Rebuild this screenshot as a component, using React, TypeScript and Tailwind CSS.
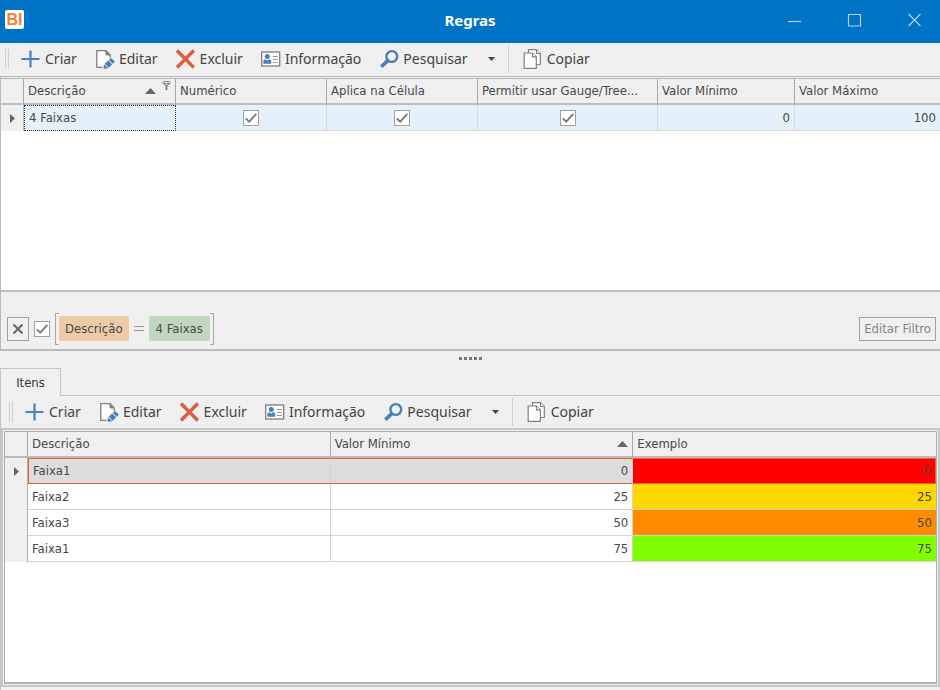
import React from 'react';
import { clsx } from 'clsx';

type IconProps = { className?: string };

const PlusIcon = () => (
  <svg className="h-5 w-5" viewBox="0 0 20 20" stroke="#4a7fb9" strokeWidth="2.2" aria-hidden="true">
    <path d="M9.5 1.5v17M0.5 10h18" />
  </svg>
);

const EditIcon = () => (
  <svg className="h-5 w-5" viewBox="0 0 20 20" aria-hidden="true">
    <path d="M2 1.5H11L15.5 6V17.5H2Z" fill="#fff" />
    <path d="M7.5 18.300H1.800V1.600H11L15.200 6V9" fill="none" stroke="#808080" strokeWidth="1.300" />
    <path d="M11 1.600V6H15.200" fill="#808080" stroke="#808080" strokeWidth="1" />
    <path d="M7.500 20l.9-5 6-6 5 4-6 7z" fill="#efefef" />
    <path
      d="M8.400 19.800l.8-4.300 4.200 3.800zM9.800 14.800l3.400-3.300 3.900 3.800-3.300 3.400zM13.900 10.900l1.500-1.400q.7-.5 1.300 0l2.600 2.500q.6.7 0 1.300l-1.500 1.400z"
      fill="#4a7fb9"
    />
  </svg>
);

const DeleteIcon = () => (
  <svg className="h-5 w-5" viewBox="0 0 20 20" stroke="#da5f42" strokeWidth="3.400" aria-hidden="true">
    <path d="M1 1.500L17.800 18.500M17.800 1.500L1 18.500" />
  </svg>
);

const InfoIcon = () => (
  <svg className="h-5 w-5" viewBox="0 0 20 20" aria-hidden="true">
    <rect x="0.700" y="3" width="18" height="14" fill="#fff" stroke="#7f7f7f" strokeWidth="1.300" />
    <circle cx="6.300" cy="7.500" r="2.500" fill="#4a7fb9" />
    <path d="M2.300 14.800v-2q0-2.300 2-2.600l2 1.300 2-1.300q2 .3 2 2.600v2z" fill="#4a7fb9" />
    <path d="M11.800 7.500h5M11.800 10.500h5M11.800 13.500h5" stroke="#9a9a9a" strokeWidth="1.200" />
  </svg>
);

const SearchIcon = () => (
  <svg className="h-5 w-5" viewBox="0 0 20 20" fill="none" stroke="#4a7fb9" aria-hidden="true">
    <circle cx="12.800" cy="7.500" r="5.400" strokeWidth="2.400" />
    <path d="M8.800 11.600L2.300 17.800" strokeWidth="3.600" />
  </svg>
);

const CopyIcon = () => (
  <svg className="h-5 w-5" viewBox="0 0 20 20" fill="#fff" stroke="#808080" strokeWidth="1.200" aria-hidden="true">
    <path d="M5.500 0.700H13.500L17.300 4.500V15.500H5.500Z" />
    <path d="M13.500 0.700V4.500H17.300" />
    <path d="M1.200 4H9.500L13.300 7.800V19.300H1.200Z" />
    <path d="M9.500 4V7.800H13.300" />
  </svg>
);

const SortIcon = () => (
  <svg className="h-[6px] w-[11px] shrink-0" viewBox="0 0 11 6" aria-hidden="true">
    <path d="M5.500 0L11 6H0z" fill="#666" />
  </svg>
);

const FilterIcon = () => (
  <svg className="h-[9px] w-[9px] shrink-0 self-start" viewBox="0 0 9 9" fill="none" stroke="#777" aria-hidden="true">
    <ellipse cx="4.500" cy="1.700" rx="4" ry="1.200" />
    <path d="M1 2.200L4.500 5 8 2.200" />
    <path d="M4.500 4.500V9" strokeWidth="1.800" />
  </svg>
);

const RowArrow = () => (
  <svg className="mx-auto h-[9px] w-[5px]" viewBox="0 0 5 9" aria-hidden="true">
    <path d="M0 0L5 4.500L0 9z" fill="#666" />
  </svg>
);

const CheckBox = ({ label, className }: IconProps & { label: string }) => (
  <label className={clsx('inline-grid h-4 w-4 place-items-center align-middle', className)}>
    <input
      type="checkbox"
      defaultChecked
      aria-label={label}
      className="peer col-start-1 row-start-1 h-4 w-4 appearance-none border border-[#a0a0a0] bg-white"
    />
    <svg
      className="pointer-events-none invisible col-start-1 row-start-1 h-3 w-3 peer-checked:visible"
      viewBox="0 0 12 12"
      fill="none"
      stroke="#777"
      strokeWidth="1.800"
      aria-hidden="true"
    >
      <path d="M0.800 6.300L4.200 9.700L11.300 1.800" />
    </svg>
  </label>
);

const actions = [
  { label: 'Criar', icon: PlusIcon },
  { label: 'Editar', icon: EditIcon },
  { label: 'Excluir', icon: DeleteIcon },
  { label: 'Informação', icon: InfoIcon },
  { label: 'Pesquisar', icon: SearchIcon },
];

const Toolbar = ({ name, className }: { name: string; className?: string }) => (
  <div
    role="toolbar"
    aria-label={name}
    className={clsx("flex h-8 items-center font-['Noto_Sans',sans-serif] text-sm text-[#444]", className)}
  >
    <span className="mr-3 h-5 w-1 border-x border-[#cfcfcf]" />
    <div className="flex items-center gap-[18px]">
      {actions.map(({ label, icon: Icon }) => (
        <button key={label} type="button" className="flex items-center gap-1">
          <Icon />
          {label}
        </button>
      ))}
    </div>
    <button type="button" aria-label="Mais opções" className="ml-3 flex h-6 w-6 items-center justify-center">
      <svg className="h-1 w-[7px]" viewBox="0 0 7 4" aria-hidden="true">
        <path d="M0 0h7L3.500 4z" fill="#444" />
      </svg>
    </button>
    <span className="ml-1 mr-[14px] h-7 w-px bg-[#cfcfcf]" />
    <button type="button" className="flex items-center gap-1">
      <CopyIcon />
      Copiar
    </button>
  </div>
);

const headCell = 'border-b-2 border-r border-b-[#bcbcbc] border-r-[#a8a8a8] px-1 text-left font-normal';
const lastHeadCell = 'border-b-2 border-[#bcbcbc] px-1 text-left font-normal';

const flags = ['Numérico', 'Aplica na Célula', 'Permitir usar Gauge/Tree...'];

const RulesTable = () => (
  <table className="w-full table-fixed border-separate border-spacing-0">
    <colgroup>
      <col className="w-[23px]" />
      <col className="w-[152px]" />
      <col className="w-[151px]" />
      <col className="w-[151px]" />
      <col className="w-[180px]" />
      <col className="w-[137px]" />
      <col />
    </colgroup>
    <thead>
      <tr className="h-[26px] bg-[#efefef]">
        <th className={headCell} aria-label="Linha" />
        <th className={headCell}>
          <span className="flex items-center gap-[6px]">
            <span className="flex-1">Descrição</span>
            <SortIcon />
            <FilterIcon />
          </span>
        </th>
        {flags.map((flag) => (
          <th key={flag} className={clsx(headCell, 'truncate')}>
            {flag}
          </th>
        ))}
        <th className={headCell}>Valor Mínimo</th>
        <th className={lastHeadCell}>Valor Máximo</th>
      </tr>
    </thead>
    <tbody>
      <tr className="h-[26px] bg-[#e4f1fa]">
        <td className="border-r border-[#b8b8b8] bg-[#efefef]">
          <RowArrow />
        </td>
        <td className="border border-dotted border-[#333] px-1">4 Faixas</td>
        {flags.map((flag) => (
          <td key={flag} className="border-b border-r border-[#d5d9dc] text-center leading-none">
            <CheckBox label={flag} />
          </td>
        ))}
        <td className="border-b border-r border-[#d5d9dc] px-1 text-right">0</td>
        <td className="border-b border-[#d5d9dc] px-1 text-right">100</td>
      </tr>
    </tbody>
  </table>
);

const items = [
  { name: 'Faixa1', min: 0, color: 'bg-[#ff0000]' },
  { name: 'Faixa2', min: 25, color: 'bg-[#ffd700]' },
  { name: 'Faixa3', min: 50, color: 'bg-[#ff8c00]' },
  { name: 'Faixa1', min: 75, color: 'bg-[#80ff00]' },
];

const ItemsTable = () => (
  <table className="w-full table-fixed border-separate border-spacing-0">
    <colgroup>
      <col className="w-[23px]" />
      <col />
      <col />
      <col />
    </colgroup>
    <thead>
      <tr className="h-[26px] bg-[#efefef]">
        <th className={headCell} aria-label="Linha" />
        <th className={headCell}>Descrição</th>
        <th className={headCell}>
          <span className="flex items-center justify-between">
            Valor Mínimo
            <SortIcon />
          </span>
        </th>
        <th className={lastHeadCell}>Exemplo</th>
      </tr>
    </thead>
    <tbody>
      {items.map((item, index) => {
        const selected = index === 0;
        const edge = selected ? 'border-y border-y-[#e8602c]' : 'border-b border-b-[#d2d2d2]';
        const fill = selected ? 'bg-[#dcdcdc]' : 'bg-white';
        return (
          <tr key={index} className="h-[26px]">
            <td className="border-r border-[#b0b0b0] bg-[#efefef]">{selected && <RowArrow />}</td>
            <td
              className={clsx(
                'border-r border-r-[#d2d2d2] px-1',
                edge,
                fill,
                selected && 'border-l border-l-[#e8602c]'
              )}
            >
              {item.name}
            </td>
            <td className={clsx('border-r border-r-[#d2d2d2] px-1 text-right', edge, fill)}>{item.min}</td>
            <td
              className={clsx('px-1 text-right', edge, item.color, selected && 'border-r border-r-[#e8602c]')}
            >
              {item.min}
            </td>
          </tr>
        );
      })}
    </tbody>
  </table>
);

const FilterBar = () => (
  <div className="flex h-[61px] items-center border-y-2 border-[#bcbcbc] px-1 pt-4">
    <button
      type="button"
      aria-label="Limpar filtro"
      className="ml-[2px] flex h-6 w-[22px] items-center justify-center border border-[#a0a0a0]"
    >
      <svg className="h-[10px] w-[10px]" viewBox="0 0 10 10" stroke="#666" strokeWidth="2" aria-hidden="true">
        <path d="M0.500 0.500l9 9M9.500 0.500l-9 9" />
      </svg>
    </button>
    <CheckBox label="Filtro ativo" className="mx-[5px]" />
    <div className="flex items-center">
      <span className="h-8 w-1 border-y border-l border-[#a8a8a8]" />
      <a href="#descricao" className="flex h-[25px] items-center rounded-[2px] bg-[#edcba6] px-[6px]">
        Descrição
      </a>
      <svg className="mx-[5px] h-[5px] w-[10px]" viewBox="0 0 10 5" stroke="#999" aria-hidden="true">
        <path d="M0 0.500h10M0 4.500h10" />
      </svg>
      <a href="#valor" className="flex h-[25px] items-center rounded-[2px] bg-[#c3d6bf] px-[7px]">
        4 Faixas
      </a>
      <span className="h-8 w-1 border-y border-r border-[#a8a8a8]" />
    </div>
    <button type="button" className="ml-auto h-6 border border-[#a0a0a0] px-1 text-[#858585]">
      Editar Filtro
    </button>
  </div>
);

const TitleBar = () => (
  <header className="grid h-[43px] grid-cols-[1fr_auto_1fr] items-center bg-[#0173c7] pb-1 text-white">
    <span className="ml-[5px] flex h-[19px] w-[19px] items-center justify-center rounded-[2px] bg-white font-['Liberation_Sans',sans-serif] text-base font-bold leading-none text-[#f58139]">
      BI
    </span>
    <h1 className="font-['Noto_Sans',sans-serif] text-[15px] font-bold">Regras</h1>
    <div className="flex justify-end gap-10 pr-4">
      <button type="button" aria-label="Minimizar" className="h-5 w-5">
        <svg viewBox="0 0 20 20" stroke="#b5cfe6" strokeWidth="1.200" aria-hidden="true">
          <path d="M4 11.500h13" />
        </svg>
      </button>
      <button type="button" aria-label="Maximizar" className="h-5 w-5">
        <svg viewBox="0 0 20 20" fill="none" stroke="#b5cfe6" strokeWidth="1.200" aria-hidden="true">
          <path d="M4.500 4.500h12v11.500h-12z" />
        </svg>
      </button>
      <button type="button" aria-label="Fechar" className="h-5 w-5">
        <svg viewBox="0 0 20 20" stroke="#b5cfe6" strokeWidth="1.200" aria-hidden="true">
          <path d="M4.500 4l12 12M16.500 4l-12 12" />
        </svg>
      </button>
    </div>
  </header>
);

const App = () => {
  return (
    <div className="flex min-h-screen flex-col bg-[#efefef] font-['DejaVu_Sans_Condensed','DejaVu_Sans',sans-serif] text-[13px] leading-5 text-[#484848]">
      <TitleBar />
      <Toolbar name="Regras" className="pl-[5px]" />

      {/* Rules grid */}
      <section className="mt-px border-l border-t border-[#b8b8b8]">
        <div className="mt-px h-[212px] border-t border-[#b8b8b8] bg-white">
          <RulesTable />
        </div>
        <FilterBar />
      </section>

      {/* Splitter */}
      <div className="flex h-[17px] items-start justify-center gap-[2px] pt-[6px]">
        {[...Array(5)].map((_, index) => (
          <span key={index} className="h-[3px] w-[3px] bg-[#777]" />
        ))}
      </div>

      {/* Items tab */}
      <div role="tablist" className="flex h-7">
        <button
          type="button"
          role="tab"
          aria-selected="true"
          className="w-[61px] border-l border-r border-t border-[#c4c4c4] text-[#333]"
        >
          Itens
        </button>
        <span className="flex-1 border-b border-[#c4c4c4]" />
      </div>
      <section className="flex flex-1 flex-col border-l border-[#c4c4c4]">
        <Toolbar name="Itens" className="pl-2" />
        <div className="flex flex-1 border-2 border-[#c8c8c8] p-px">
          <div className="flex-1 border border-b-2 border-[#b0b0b0] bg-white">
            <ItemsTable />
          </div>
        </div>
        <div className="h-[3px]" />
      </section>
    </div>
  );
};

export default App;
